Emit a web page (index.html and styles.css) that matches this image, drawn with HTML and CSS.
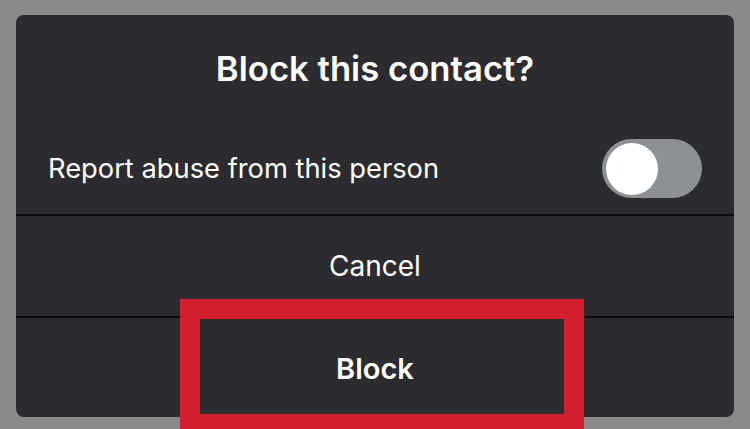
FILE: index.html
```html
<!DOCTYPE html>
<html>
<head>
<meta charset="utf-8">
<link rel="stylesheet" href="styles.css">
</head>
<body>
<div class="dialog">
  <div class="title">Block this contact?</div>
  <div class="row">
    <span class="label">Report abuse from this person</span>
    <span class="toggle"><span class="knob"></span></span>
  </div>
  <div class="divider"></div>
  <div class="action">Cancel</div>
  <div class="divider"></div>
  <div class="action bold">Block</div>
</div>
<div class="highlight"></div>
</body>
</html>
```
FILE: styles.css
```css
html, body {
  margin: 0;
  padding: 0;
  width: 750px;
  height: 429px;
  overflow: hidden;
  background: #8a8a8a;
  font-family: Inter, "Noto Sans", "Liberation Sans", sans-serif;
  color: #ffffff;
}
body {
  position: relative;
  padding: 15px 16px 0 16px;
  box-sizing: border-box;
}
.dialog {
  background: #2c2c30;
  border-radius: 8px;
  width: 718px;
  height: 402px;
  display: flex;
  flex-direction: column;
  overflow: hidden;
}
.title {
  height: 108px;
  display: flex;
  align-items: center;
  justify-content: center;
  font-size: 34.7px;
  font-weight: 600;
  letter-spacing: 0;
  padding-bottom: 3px;
  box-sizing: border-box;
}
.row {
  height: 91px;
  display: flex;
  align-items: center;
  justify-content: space-between;
  padding: 0 32px 0 32px;
}
.label {
  font-size: 27.3px;
  font-weight: 400;
}
.toggle {
  width: 100px;
  height: 59px;
  border-radius: 30px;
  background: #8e9194;
  display: flex;
  align-items: center;
  padding-left: 4px;
  box-sizing: border-box;
}
.knob {
  width: 52px;
  height: 52px;
  border-radius: 50%;
  background: #ffffff;
}
.divider {
  height: 2px;
  background: #0c0c0f;
}
.action {
  height: 100px;
  display: flex;
  align-items: center;
  justify-content: center;
  font-size: 28px;
  font-weight: 400;
}
.action.bold {
  font-size: 29px;
  font-weight: 600;
  height: 99px;
  padding-top: 2px;
  box-sizing: border-box;
}
.highlight {
  position: absolute;
  left: 180px;
  top: 299px;
  width: 404px;
  height: 135px;
  border: 20px solid #d21e2d;
  box-sizing: border-box;
}
```
